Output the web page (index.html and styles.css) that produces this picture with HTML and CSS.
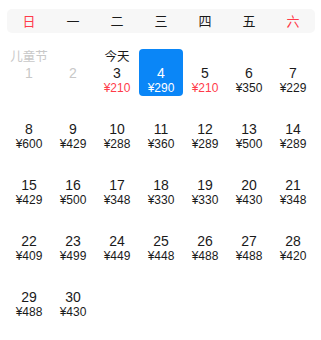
FILE: index.html
```html
<!DOCTYPE html>
<html lang="zh">
<head>
<meta charset="utf-8">
<link rel="stylesheet" href="styles.css">
</head>
<body>
<div class="cal">
  <div class="week">
    <span class="wk red">日</span><span class="wk">一</span><span class="wk">二</span><span class="wk">三</span><span class="wk">四</span><span class="wk">五</span><span class="wk red">六</span>
  </div>
  <div class="grid">
    <div class="cell past"><div class="lab">儿童节</div><div class="num">1</div><div class="price"></div></div>
    <div class="cell past"><div class="lab"></div><div class="num">2</div><div class="price"></div></div>
    <div class="cell"><div class="lab">今天</div><div class="num">3</div><div class="price red">¥210</div></div>
    <div class="cell sel"><div class="lab"></div><div class="num">4</div><div class="price">¥290</div></div>
    <div class="cell"><div class="lab"></div><div class="num">5</div><div class="price red">¥210</div></div>
    <div class="cell"><div class="lab"></div><div class="num">6</div><div class="price">¥350</div></div>
    <div class="cell"><div class="lab"></div><div class="num">7</div><div class="price">¥229</div></div>

    <div class="cell"><div class="lab"></div><div class="num">8</div><div class="price">¥600</div></div>
    <div class="cell"><div class="lab"></div><div class="num">9</div><div class="price">¥429</div></div>
    <div class="cell"><div class="lab"></div><div class="num">10</div><div class="price">¥288</div></div>
    <div class="cell"><div class="lab"></div><div class="num">11</div><div class="price">¥360</div></div>
    <div class="cell"><div class="lab"></div><div class="num">12</div><div class="price">¥289</div></div>
    <div class="cell"><div class="lab"></div><div class="num">13</div><div class="price">¥500</div></div>
    <div class="cell"><div class="lab"></div><div class="num">14</div><div class="price">¥289</div></div>

    <div class="cell"><div class="lab"></div><div class="num">15</div><div class="price">¥429</div></div>
    <div class="cell"><div class="lab"></div><div class="num">16</div><div class="price">¥500</div></div>
    <div class="cell"><div class="lab"></div><div class="num">17</div><div class="price">¥348</div></div>
    <div class="cell"><div class="lab"></div><div class="num">18</div><div class="price">¥330</div></div>
    <div class="cell"><div class="lab"></div><div class="num">19</div><div class="price">¥330</div></div>
    <div class="cell"><div class="lab"></div><div class="num">20</div><div class="price">¥430</div></div>
    <div class="cell"><div class="lab"></div><div class="num">21</div><div class="price">¥348</div></div>

    <div class="cell"><div class="lab"></div><div class="num">22</div><div class="price">¥409</div></div>
    <div class="cell"><div class="lab"></div><div class="num">23</div><div class="price">¥499</div></div>
    <div class="cell"><div class="lab"></div><div class="num">24</div><div class="price">¥449</div></div>
    <div class="cell"><div class="lab"></div><div class="num">25</div><div class="price">¥448</div></div>
    <div class="cell"><div class="lab"></div><div class="num">26</div><div class="price">¥488</div></div>
    <div class="cell"><div class="lab"></div><div class="num">27</div><div class="price">¥488</div></div>
    <div class="cell"><div class="lab"></div><div class="num">28</div><div class="price">¥420</div></div>

    <div class="cell"><div class="lab"></div><div class="num">29</div><div class="price">¥488</div></div>
    <div class="cell"><div class="lab"></div><div class="num">30</div><div class="price">¥430</div></div>
  </div>
</div>
</body>
</html>
```
FILE: styles.css
```css
html, body {
  margin: 0;
  padding: 0;
  background: #ffffff;
}
body {
  font-family: "Noto Sans CJK SC", "Noto Sans", sans-serif;
  color: #1a1a1a;
}
.cal {
  padding: 9px 6px 0 7px;
}
.week {
  display: grid;
  grid-template-columns: repeat(7, 1fr);
  height: 24px;
  background: #f7f7f7;
  border-radius: 5px;
  align-items: center;
}
.wk {
  text-align: center;
  font-size: 13px;
  line-height: 24px;
  color: #1a1a1a;
}
.red {
  color: #ff3b4a;
}
.grid {
  margin-top: 16px;
  display: grid;
  grid-template-columns: repeat(7, 1fr);
  row-gap: 9px;
}
.cell {
  height: 47px;
  display: flex;
  flex-direction: column;
  align-items: center;
  border-radius: 4px;
}
.lab {
  height: 14px;
  line-height: 14px;
  font-size: 12.5px;
}
.num {
  margin-top: 2.5px;
  height: 15px;
  line-height: 15px;
  font-size: 14px;
  font-family: "Liberation Sans", "Noto Sans", sans-serif;
}
.price {
  height: 15px;
  line-height: 15px;
  font-size: 12px;
  font-family: "Liberation Sans", "Noto Sans CJK SC", sans-serif;
}
.past {
  color: #c8c8c8;
}
.sel {
  background: #0a86f7;
  color: #ffffff;
}
```
